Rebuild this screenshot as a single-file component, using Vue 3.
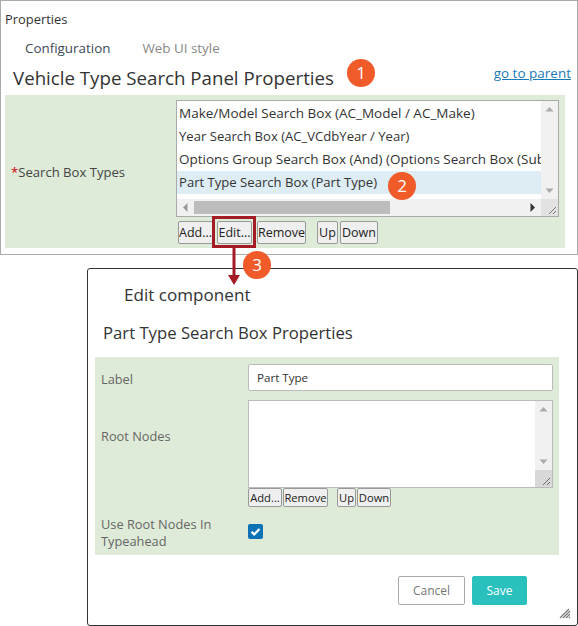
<template>
  <div class="page">
    <section class="panel">
      <div class="panel-title">Properties</div>
      <div class="tabs">
        <span class="tab active">Configuration</span>
        <span class="tab">Web UI style</span>
      </div>
      <div class="panel-head">
        <h2 class="panel-heading">Vehicle Type Search Panel Properties</h2>
        <a class="parent-link" href="#">go to parent</a>
        <span class="badge badge-one">1</span>
      </div>
      <div class="form-area">
        <label class="box-label"><span class="req">*</span>Search Box Types</label>
        <div class="box-col">
          <div class="listbox">
            <div class="list-main">
              <div class="options">
                <div
                  v-for="item in searchBoxes"
                  :key="item.text"
                  class="option"
                  :class="{ selected: item.selected, tight: item.tight }"
                >{{ item.text }}</div>
              </div>
              <div class="vbar">
                <svg width="17" height="17" viewBox="0 0 17 17"><path d="M4.5 10.5 8.5 6l4 4.5z" fill="#aaa" /></svg>
                <svg width="17" height="17" viewBox="0 0 17 17"><path d="M4.5 6.5 8.5 11l4-4.5z" fill="#aaa" /></svg>
              </div>
            </div>
            <div class="hbar">
              <svg width="17" height="17" viewBox="0 0 17 17"><path d="M10.5 4 6 8.5l4.5 4.5z" fill="#999" /></svg>
              <div class="hbar-track"><div class="hbar-thumb"></div></div>
              <svg width="17" height="17" viewBox="0 0 17 17"><path d="M6.5 4 11 8.5 6.5 13z" fill="#333" /></svg>
              <div class="corner">
                <svg width="17" height="17" viewBox="0 0 17 17"><path d="M15 8 8 15M15 12l-3 3" stroke="#777" fill="none" /></svg>
              </div>
            </div>
          </div>
          <div class="list-buttons">
            <button class="btn add">Add...</button>
            <span class="edit-mark"><button class="btn edit">Edit...</button></span>
            <button class="btn remove">Remove</button>
            <button class="btn up">Up</button>
            <button class="btn down">Down</button>
          </div>
        </div>
        <span class="badge badge-two">2</span>
        <svg class="arrow" width="14" height="38" viewBox="0 0 14 38">
          <path d="M7 0v28" stroke="#a31b24" stroke-width="3" fill="none" />
          <path d="M1 27h12l-6 10z" fill="#a31b24" />
        </svg>
        <span class="badge badge-three">3</span>
      </div>
    </section>

    <section class="dialog">
      <div class="dialog-title">Edit component</div>
      <h3 class="dialog-heading">Part Type Search Box Properties</h3>
      <div class="dialog-form">
        <div class="row row-label">
          <label>Label</label>
          <div class="text-input">Part Type</div>
        </div>
        <div class="row row-nodes">
          <label>Root Nodes</label>
          <div>
            <div class="textarea">
              <div class="ta-bar">
                <svg width="17" height="17" viewBox="0 0 17 17"><path d="M4.5 10.5 8.5 6l4 4.5z" fill="#aaa" /></svg>
                <svg width="17" height="17" viewBox="0 0 17 17"><path d="M4.5 6.5 8.5 11l4-4.5z" fill="#aaa" /></svg>
                <div class="ta-corner">
                  <svg width="17" height="17" viewBox="0 0 17 17"><path d="M15 8 8 15M15 12l-3 3" stroke="#666" fill="none" /></svg>
                </div>
              </div>
            </div>
            <div class="node-buttons">
              <button class="btn small n-add">Add...</button>
              <button class="btn small n-remove">Remove</button>
              <button class="btn small n-up">Up</button>
              <button class="btn small n-down">Down</button>
            </div>
          </div>
        </div>
        <div class="row row-check">
          <label>Use Root Nodes In Typeahead</label>
          <span class="checkbox">
            <svg width="15" height="15" viewBox="0 0 15 15"><path d="M3.5 7.8 6.2 10.4 11.5 5" stroke="#fff" stroke-width="2.2" fill="none" /></svg>
          </span>
        </div>
      </div>
      <div class="dialog-actions">
        <button class="action cancel">Cancel</button>
        <button class="action save">Save</button>
      </div>
      <svg class="grip" width="12" height="12" viewBox="0 0 12 12">
        <path d="M1 11 10 2M4 11l7-7M7 11l4-4M10 11l1-1" stroke="#777" stroke-width="1.2" fill="none" />
      </svg>
    </section>
  </div>
</template>

<script setup>
const searchBoxes = [
  { text: 'Make/Model Search Box (AC_Model / AC_Make)' },
  { text: 'Year Search Box (AC_VCdbYear / Year)', tight: true },
  { text: 'Options Group Search Box (And) (Options Search Box (Sub' },
  { text: 'Part Type Search Box (Part Type)', selected: true, tight: true }
]
</script>

<style>
html,
body {
  margin: 0;
  background: #fff;
}
</style>

<style scoped>
.page {
  width: 578px;
  height: 626px;
  overflow: hidden;
  font-family: "Open Sans", "Noto Sans", sans-serif;
  color: #333;
  background: #fff;
}

.panel {
  box-sizing: border-box;
  height: 255px;
  padding: 11px 5px 0 4px;
  border: 1px solid #aaa;
  position: relative;
}

.panel-title {
  font-size: 12.9px;
  line-height: 14px;
}

.tabs {
  display: flex;
  gap: 32px;
  padding: 14px 0 0 20px;
  font-size: 13.4px;
  line-height: 16px;
  height: 16px;
}

.tab {
  color: #888;
}

.tab.active {
  color: #3d4a55;
}

.panel-head {
  display: flex;
  align-items: flex-end;
  justify-content: space-between;
  height: 23px;
  margin: 10px 0 6px 8px;
  position: relative;
}

.panel-heading {
  margin: 0 0 -1px;
  font-size: 18.7px;
  line-height: 24px;
  font-weight: 400;
}

.parent-link {
  color: #1a7ab8;
  font-size: 13.5px;
  line-height: 16px;
  margin-bottom: 8px;
  margin-right: 1px;
}

.badge {
  position: absolute;
  width: 28px;
  height: 28px;
  border-radius: 50%;
  background: #f15a29;
  color: #fff;
  font-size: 17px;
  line-height: 28px;
  text-align: center;
  z-index: 3;
}

.badge-one {
  left: 334px;
  top: -7px;
}

.badge-two {
  left: 383px;
  top: 77px;
}

.badge-three {
  left: 238px;
  top: 156px;
}

.form-area {
  display: flex;
  background: #dfebd9;
  width: 560px;
  height: 153px;
  box-sizing: border-box;
  padding: 5px 0 0 6px;
  position: relative;
}

.box-label {
  width: 165px;
  padding-top: 64px;
  font-size: 13.1px;
  line-height: 16px;
  color: #444;
}

.req {
  color: #c00;
}

.listbox {
  width: 383px;
  height: 117px;
  box-sizing: border-box;
  border: 1px solid #aaa;
  background: #fff;
  display: flex;
  flex-direction: column;
}

.list-main {
  flex: 1;
  display: flex;
  min-height: 0;
}

.options {
  flex: 1;
  min-width: 0;
  overflow: hidden;
  padding-top: 1px;
}

.option {
  height: 23px;
  line-height: 23px;
  padding-left: 2px;
  font-size: 13.5px;
  white-space: nowrap;
}

.option.tight {
  font-size: 13.1px;
}

.option.selected {
  background: #deecf4;
}

.vbar {
  width: 17px;
  background: #f1f1f1;
  display: flex;
  flex-direction: column;
  justify-content: space-between;
}

.vbar svg,
.ta-bar svg {
  display: block;
}

.hbar {
  height: 17px;
  display: flex;
  background: #f1f1f1;
}

.hbar-track {
  flex: 1;
  padding-top: 2px;
}

.hbar-thumb {
  width: 196px;
  height: 13px;
  background: #bdbdbd;
}

.corner {
  width: 17px;
  height: 17px;
  background: #e2e2e2;
}

.list-buttons {
  display: flex;
  margin: 4px 0 0 2px;
}

.btn {
  height: 23px;
  box-sizing: border-box;
  padding: 0;
  border: 1px solid #999;
  border-radius: 2px;
  background: #efefef;
  color: #222;
  font-family: inherit;
  font-size: 12.5px;
  line-height: 20px;
  white-space: nowrap;
}

.add {
  width: 35px;
}

.edit {
  width: 35px;
  display: block;
}

.remove {
  width: 49px;
  margin-left: 5px;
}

.up {
  width: 21px;
  margin-left: 11px;
}

.down {
  width: 38px;
  margin-left: 2px;
}

.edit-mark {
  display: block;
  position: relative;
  margin-left: 4px;
}

.edit-mark::after {
  content: "";
  position: absolute;
  left: -5px;
  right: -4px;
  top: -5px;
  bottom: -4px;
  border: 3px solid #a31b24;
  pointer-events: none;
}

.arrow {
  position: absolute;
  left: 222px;
  top: 153px;
  z-index: 2;
}

.dialog {
  box-sizing: border-box;
  width: 491px;
  height: 358px;
  margin: 13px 0 0 87px;
  padding: 15px 0 0 7px;
  border: 1px solid #333;
  border-radius: 3px;
  position: relative;
}

.dialog-title {
  padding-left: 29px;
  font-size: 17.1px;
  line-height: 21px;
}

.dialog-heading {
  margin: 17px 0 0 8px;
  font-size: 16.7px;
  line-height: 22px;
  font-weight: 400;
}

.dialog-form {
  width: 464px;
  height: 198px;
  margin-top: 13px;
  padding: 7px 6px 0;
  box-sizing: border-box;
  background: #dfebd9;
  color: #666;
}

.row {
  display: grid;
  grid-template-columns: 147px 305px;
}

.row label {
  font-size: 12.8px;
  line-height: 18px;
}

.row-label {
  align-items: center;
}

.row-label label {
  padding-top: 3px;
}

.text-input {
  box-sizing: border-box;
  height: 27px;
  padding-left: 8px;
  border: 1px solid #bbb;
  border-radius: 2px;
  background: #fff;
  color: #333;
  font-size: 11.6px;
  line-height: 26px;
}

.row-nodes {
  margin-top: 9px;
}

.row-nodes label {
  padding-top: 27px;
}

.textarea {
  box-sizing: border-box;
  height: 88px;
  border: 1px solid #bbb;
  background: #fff;
  display: flex;
  justify-content: flex-end;
}

.ta-bar {
  width: 17px;
  background: #f1f1f1;
  display: flex;
  flex-direction: column;
  position: relative;
}

.ta-bar svg:nth-child(2) {
  margin-top: 35px;
}

.ta-corner {
  position: absolute;
  right: 0;
  bottom: 0;
  width: 17px;
  height: 17px;
  background: #d8d8d8;
}

.node-buttons {
  display: flex;
}

.btn.small {
  height: 19px;
  font-size: 11.2px;
  line-height: 16px;
}

.n-add {
  width: 34px;
}

.n-remove {
  width: 45px;
  margin-left: 1px;
}

.n-up {
  width: 19px;
  margin-left: 9px;
}

.n-down {
  width: 34px;
  margin-left: 1px;
}

.row-check {
  margin-top: 9px;
}

.row-check label {
  line-height: 17px;
}

.checkbox {
  display: block;
  width: 15px;
  height: 15px;
  margin-top: 8px;
  border-radius: 2px;
  background: #0a72b5;
}

.checkbox svg {
  display: block;
}

.dialog-actions {
  display: flex;
  gap: 7px;
  margin: 21px 0 0 303px;
}

.action {
  height: 29px;
  box-sizing: border-box;
  border-radius: 2px;
  font-family: inherit;
  font-size: 12px;
}

.cancel {
  width: 67px;
  border: 1px solid #aaa;
  background: #fff;
  color: #777;
}

.save {
  width: 55px;
  border: 1px solid #29c0be;
  background: #29c0be;
  color: #fff;
}

.grip {
  position: absolute;
  right: 6px;
  bottom: 6px;
}
</style>
